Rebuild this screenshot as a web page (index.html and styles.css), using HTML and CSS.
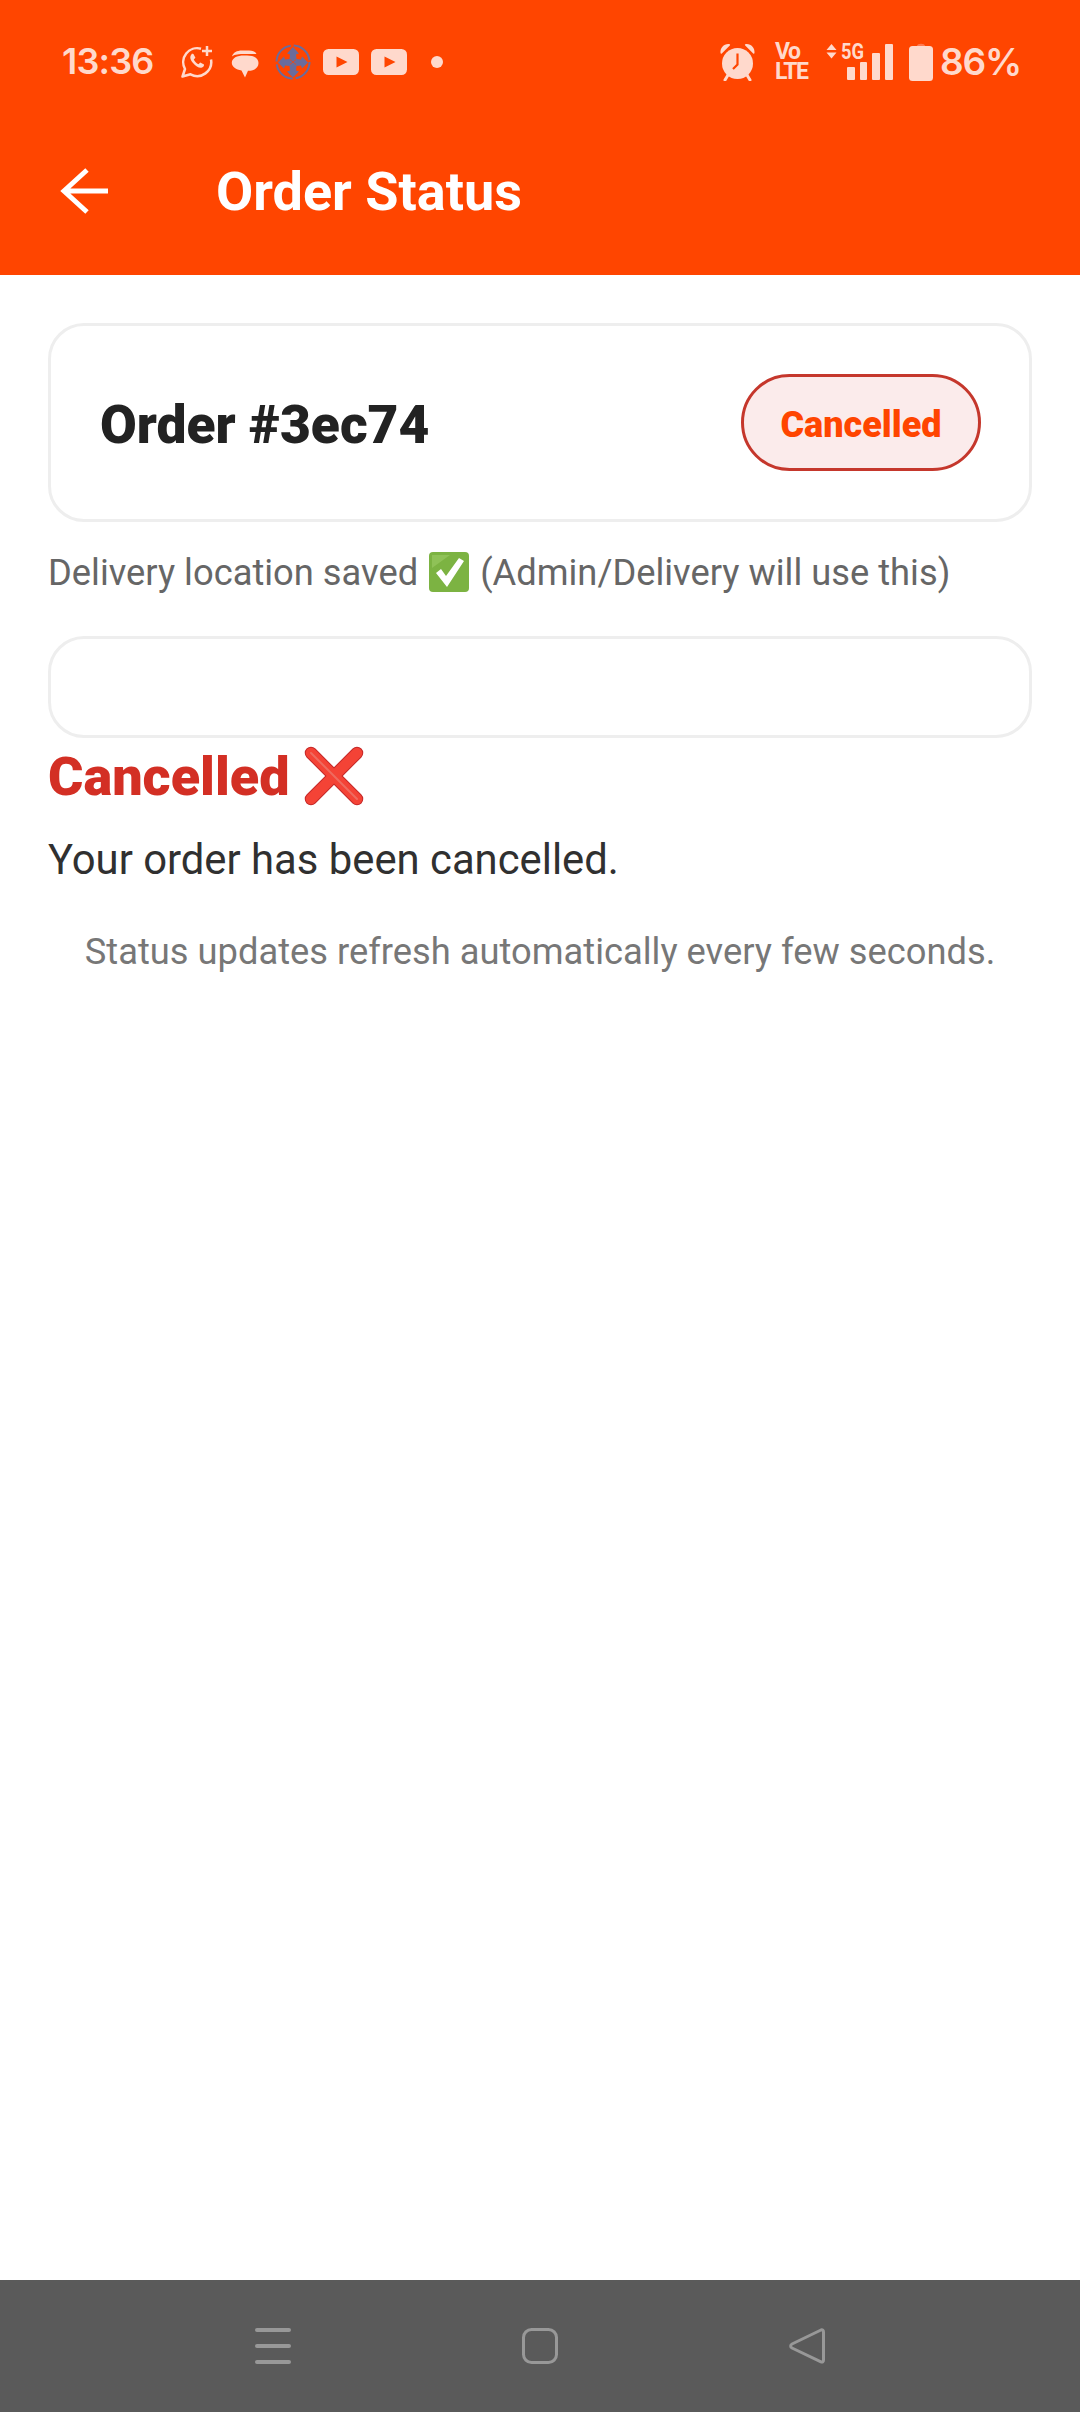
FILE: index.html
```html
<!DOCTYPE html>
<html lang="en">
<head>
<meta charset="utf-8">
<title>Order Status</title>
<link rel="stylesheet" href="styles.css">
</head>
<body>
<div class="screen">
  <header class="appbar">
    <div class="statusbar">
      <div class="status-left">
        <span class="time">13:36</span>
        <svg class="ic-wa" viewBox="0 0 34 34" fill="none" stroke="#ffd9cc"><path d="M21 3.700A14 14 0 0 0 5 24L2.500 31.500l8-2.200A14 14 0 0 0 31 14.500" stroke-width="2.500" stroke-linejoin="round"/><path d="M11.500 9.500c-2 2-1.500 5 1.500 8.500s6.500 5.500 9 4.500c1.500-.6 2.300-2 2-3l-3.800-2-1.700 1.700c-2-.8-3.800-2.700-4.700-4.700l1.600-1.700-1.800-3.600c-.8-.4-1.400-.4-2.100-.2z" fill="#ffd9cc" stroke="none"/><path d="M27 1v10M22 6h10" stroke-width="2.500"/></svg>
        <svg class="ic-chat" viewBox="0 0 28 28"><path d="M1 6.500C2 2.500 6 .5 11 .5h7c4 0 6.500 1.500 7.500 3.500H12C6 4 2.500 5 1 6.500z" fill="#ffd9cc"/><path d="M13 5.500h3c6.500 0 11.500 2.500 11.500 7.500s-4.500 7.800-10 7.800h-.5l-3 6.700-3.500-7C5 19.500.8 17 .8 12.800.8 8 6 5.500 13 5.500z" fill="#ffd9cc"/></svg>
        <svg class="ic-globe" viewBox="0 0 36 36" fill="none" stroke="#6a6c9c"><circle cx="18" cy="18" r="16.500" stroke-width="2" stroke-dasharray="23 3"/><path d="M18 3l6 6.500-3 1 .5 4.500 4.500.5 1-3 6 6-6 6-1-3-4.500.5-.5 4.500 3 1-6 6-6-6 3-1-.5-4.500-4.500-.5-1 3-6-6 6-6 1 3 4.500-.5.5-4.500-3-1z" fill="#6a6c9c" stroke="none"/><path d="M15 15.500l6 5M21 15.500l-6 5" stroke="#ff4500" stroke-width=".7"/></svg>
        <svg class="ic-yt" viewBox="0 0 36 26"><rect width="36" height="26" rx="5.500" fill="#ffd9cc"/><path d="M13.500 7.500l11 5.500-11 5.500z" fill="#ff4500"/></svg>
        <svg class="ic-yt" viewBox="0 0 36 26"><rect width="36" height="26" rx="5.500" fill="#ffd9cc"/><path d="M13.500 7.500l11 5.500-11 5.500z" fill="#ff4500"/></svg>
        <span class="dot"></span>
      </div>
      <div class="status-right">
        <svg class="ic-alarm" viewBox="0 0 37 38"><circle cx="18.500" cy="20.500" r="15.500" fill="#ffd9cc"/><path d="M1.500 10C1 5 5 .5 10 1c1 0 1.500 1 .8 1.500L2.800 10.500c-.5.500-1.200.3-1.300-.5zM35.500 10C36 5 32 .5 27 1c-1 0-1.500 1-.8 1.500l8 8c.5.500 1.200.3 1.300-.5z" fill="#ffd9cc"/><path d="M9 32l-3 5M28 32l3 5" stroke="#ffd9cc" stroke-width="3" stroke-linecap="round"/><path d="M18.500 10.500v11l-4.500 4.500" fill="none" stroke="#ff4500" stroke-width="2.200"/></svg>
        <span class="volte">Vo<br>LTE</span>
        <svg class="ic-bars" viewBox="0 0 67 36"><path d="M5.500 14.500l5-6H.5zM5.500 0l5 6H.5z" fill="#ffd9cc"/><text class="net-label" x="15" y="15" font-size="22" textLength="23" lengthAdjust="spacingAndGlyphs">5G</text><rect x="21" y="23" width="8" height="13" rx="1" fill="#ffd9cc"/><rect x="34" y="18" width="7" height="18" rx="1" fill="#ffd9cc"/><rect x="46" y="9" width="8" height="27" rx="1" fill="#ffd9cc"/><rect x="59" y="0" width="8" height="36" rx="1" fill="#ffd9cc"/></svg>
        <svg class="ic-batt" viewBox="0 0 24 38"><path d="M8 3c0-3 8-3 8 0z" fill="#ff7a50"/><rect y="3" width="24" height="35" rx="3.500" fill="#ffd9cc"/></svg>
        <span class="pct">86%</span>
      </div>
    </div>
    <div class="toolbar">
      <svg class="ic-back" viewBox="0 0 48 46" fill="none" stroke="#fff" stroke-width="5"><path d="M48 23H4M27 2L4 23l23 21"/></svg>
      <h1 class="title">Order Status</h1>
    </div>
  </header>

  <main class="content">
    <section class="card order-card">
      <span class="order-id">Order #3ec74</span>
      <span class="pill">Cancelled</span>
    </section>
    <p class="saved">Delivery location saved <svg class="emoji-check" role="img" aria-label="✅" viewBox="0 0 40 40"><rect width="40" height="40" rx="4" fill="#7cb342"/><path d="M3 3h18L3 16z" fill="#9ccc65" opacity=".6"/><path d="M7 21l5-4 5 7L30 6l5 3-17 26z" fill="#fff"/></svg> (Admin/Delivery will use this)</p>
    <section class="card empty-card"></section>
    <h2 class="cancel-head">Cancelled <svg class="emoji-x" role="img" aria-label="❌" viewBox="0 0 62 62" fill="none" stroke-linecap="round"><path d="M8 8l46 46M54 8L8 54" stroke="#c62828" stroke-width="12.500"/><path d="M8 8l46 46M54 8L8 54" stroke="#f44336" stroke-width="10.500"/><path d="M8 8l46 46" stroke="#ef6a5f" stroke-width="2"/></svg></h2>
    <p class="cancel-msg">Your order has been cancelled.</p>
    <p class="refresh-note">Status updates refresh automatically every few seconds.</p>
  </main>

  <nav class="navbar">
    <svg class="nav-ic" viewBox="0 0 36 36" fill="none" stroke="#989898" stroke-width="4" stroke-linecap="round"><path d="M2 2h32M2 18h32M2 34h32"/></svg>
    <svg class="nav-ic" viewBox="0 0 36 36" fill="none" stroke="#989898" stroke-width="3"><rect x="1.500" y="1.500" width="33" height="33" rx="8"/></svg>
    <svg class="nav-ic" viewBox="0 0 36 36" fill="none" stroke="#989898" stroke-width="3" stroke-linejoin="round"><path d="M32 2c1.500-.5 2.500.5 2.500 2v28c0 1.500-1 2.500-2.500 1.800L3 20c-1.800-1-1.800-3 0-4z"/></svg>
  </nav>
</div>
</body>
</html>
```
FILE: styles.css
```css
* { box-sizing: border-box; }
html, body { margin: 0; padding: 0; }
body { font-family: Roboto, "Noto Sans", sans-serif; background: #fff; color: #222; }
.screen { width: 1080px; height: 2412px; display: flex; flex-direction: column; overflow: hidden; }

.appbar { background: #ff4500; height: 275px; flex: none; }
.statusbar { height: 107px; padding: 41px 61px 25px 62px; display: flex; justify-content: space-between; align-items: center; color: #ffd9cc; font-family: Inter, sans-serif; }
.status-left, .status-right { display: flex; align-items: center; }
.time { font-size: 36px; font-weight: 600; line-height: 41px; width: 91px; letter-spacing: -0.8px; white-space: nowrap; }
.ic-wa { width: 34px; height: 34px; margin-left: 27px; }
.ic-chat { width: 28px; height: 28px; margin-left: 17px; margin-top: 4px; }
.ic-globe { width: 36px; height: 36px; margin-left: 16px; }
.ic-yt { width: 36px; height: 26px; margin-left: 12px; }
.dot { width: 12px; height: 12px; border-radius: 50%; background: #ffd9cc; margin-left: 24px; }
.ic-alarm { width: 37px; height: 38px; }
.volte { display: block; width: 33px; height: 40px; margin-left: 19px; font-family: Roboto, sans-serif; font-weight: 700; font-size: 23px; line-height: 20px; letter-spacing: -1.6px; white-space: nowrap; }
.net-label { font-family: Roboto, sans-serif; font-weight: 700; fill: #ffd9cc; }
.ic-bars { display: block; width: 67px; height: 36px; margin-left: 18px; overflow: visible; }
.ic-batt { width: 24px; height: 38px; margin-left: 16px; }
.pct { font-size: 37px; font-weight: 600; line-height: 41px; width: 79px; margin-left: 7px; white-space: nowrap; letter-spacing: -1.2px; }

.toolbar { height: 168px; padding-left: 60px; display: flex; align-items: center; }
.ic-back { width: 48px; height: 46px; flex: none; }
.title { margin: 2px 0 0 108px; color: #fff; font-size: 54px; font-weight: 700; line-height: 64px; white-space: nowrap; }

.content { flex: 1; padding: 48px 48px 0; display: flex; flex-direction: column; }
.card { border: 3px solid #eeeeee; border-radius: 36px; background: #fff; }
.order-card { height: 199px; padding: 5px 48px 0 49px; display: flex; align-items: center; justify-content: space-between; }
.order-id { font-size: 53.300px; font-weight: 900; line-height: 64px; color: #222; white-space: nowrap; }
.pill { height: 97px; width: 240px; margin-top: -5px; padding-top: 5px; border: 3px solid #c5372c; border-radius: 49px; background: #fbebeb; color: #ff4500; font-size: 36px; font-weight: 900; display: flex; align-items: center; justify-content: center; }
.saved { margin: 27px 0 0; font-size: 36.300px; line-height: 48px; color: #666; white-space: nowrap; }
.emoji-check { width: 40px; height: 40px; vertical-align: -7px; margin: 0 2px 0 2px; }
.empty-card { height: 102px; margin-top: 39px; }
.cancel-head { margin: 7px 0 0; font-size: 54px; font-weight: 900; line-height: 64px; color: #d32f24; white-space: nowrap; }
.emoji-x { width: 62px; height: 62px; vertical-align: -12px; }
.cancel-msg { margin: 27px 0 0; font-size: 41.800px; line-height: 48px; color: #303030; white-space: nowrap; }
.refresh-note { margin: 44px 0 0; font-size: 36.300px; line-height: 48px; color: #777; text-align: center; white-space: nowrap; }

.navbar { height: 132px; flex: none; background: #5a5a5a; display: flex; align-items: center; padding: 0 255px; justify-content: space-between; }
.nav-ic { width: 36px; height: 36px; display: block; }
```
